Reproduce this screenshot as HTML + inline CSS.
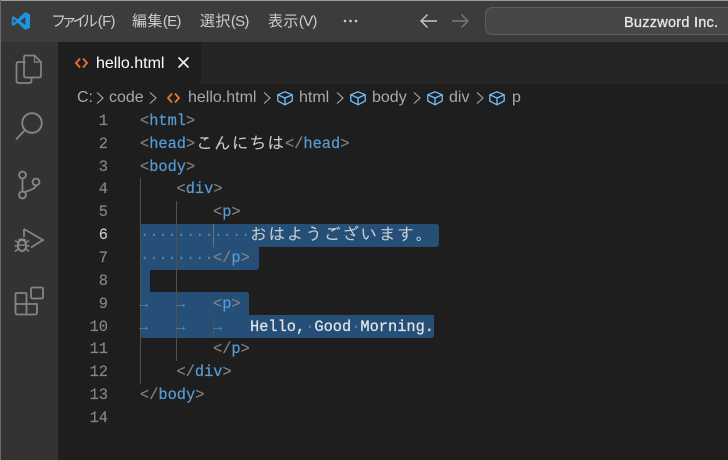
<!DOCTYPE html>
<html><head><meta charset="utf-8"><style>
*{margin:0;padding:0;box-sizing:border-box}
html,body{width:728px;height:460px;overflow:hidden;background:#1e1e1e}
body{position:relative;font-family:"Liberation Sans","Noto Sans CJK JP",sans-serif}
.a{position:absolute;white-space:pre}
#title{left:0;top:0;width:728px;height:42px;background:#3c3c3c;border-top:1px solid #9a9a9a}
#act{left:0;top:42px;width:58px;height:418px;background:#333}
#edge{left:0;top:0;width:1px;height:460px;background:#6a6a6a}
#tabs{left:58px;top:42px;width:670px;height:42px;background:#252526}
#tab{left:58px;top:42px;width:143px;height:42px;background:#1e1e1e}
.m{top:12px;font-size:15px;color:#ccc;line-height:20px;letter-spacing:.4px}
.m i{font-style:normal;letter-spacing:-.7px}
.bc{top:88px;font-size:16px;line-height:20px;color:#a9a9a9}
.ln{left:80px;width:28px;text-align:right;font:15.33px/22.85px "Liberation Mono",monospace;color:#858585;margin-top:1px;-webkit-text-stroke:.15px currentColor}
.c{font:15.33px/22.85px "Liberation Mono","IPAGothic",monospace;color:#d4d4d4;left:140px;margin-top:1px;-webkit-text-stroke:.2px currentColor}
.j{font-family:"IPAGothic","Noto Sans CJK JP",sans-serif;font-size:17px;letter-spacing:1.4px;-webkit-text-stroke:0;color:#c8ced4}
.g{color:#808080}.b{color:#569cd6}
.s{background:#264f78;position:absolute}
.ig{position:absolute;width:1px;background:#505050}
.d{font:15.33px/22.85px "Liberation Mono",monospace;color:#5b86ad;margin-top:1px}
svg{position:absolute;overflow:visible}
</style></head><body>
<div class="a" id="title"></div>
<div class="a" id="act"></div>
<div class="a" id="tabs"></div>
<div class="a" id="tab"></div>
<div class="a" id="edge"></div>

<svg style="left:11px;top:11px" width="20" height="20" viewBox="0 0 20 20"><path d="M14.2 1 L19 3.3 V16.7 L14.2 19 L6.5 11.8 L2.6 14.800 L.8 13.800 V6.200 L2.600 5.200 L6.500 8.200 Z" fill="#1f93dc"/><path d="M14.300 6 L9.400 10 L14.300 14 Z" fill="#3c3c3c"/><path d="M2.600 7.800 V12.200 L5 10 Z" fill="#3c3c3c"/></svg>
<div class="a m" style="left:51px"><span style="letter-spacing:-4.400px">ファイル</span><i style="margin-left:4.400px">(F)</i></div>
<div class="a m" style="left:132px">編集<i>(E)</i></div>
<div class="a m" style="left:200px">選択<i>(S)</i></div>
<div class="a m" style="left:268px">表示<i>(V)</i></div>
<svg style="left:343px;top:19px" width="16" height="4"><circle cx="2" cy="2" r="1.300" fill="#ccc"/><circle cx="7.500" cy="2" r="1.300" fill="#ccc"/><circle cx="13" cy="2" r="1.300" fill="#ccc"/></svg>
<svg style="left:420px;top:13px" width="18" height="16" fill="none" stroke="#c8c8c8" stroke-width="1.400"><path d="M1 8 H17 M7.500 1.500 L1 8 L7.500 14.500"/></svg>
<svg style="left:451px;top:13px" width="18" height="16" fill="none" stroke="#787878" stroke-width="1.400"><path d="M1 8 H17 M10.500 1.500 L17 8 L10.500 14.500"/></svg>
<div class="a" style="left:485px;top:7px;width:260px;height:28px;background:#474747;border:1px solid #5e5e5e;border-radius:7px"></div>
<div class="a" style="left:624px;top:13px;font-size:14.500px;line-height:20px;letter-spacing:.25px;color:#e8e8e8;-webkit-text-stroke:.3px #e8e8e8">Buzzword Inc.</div>

<svg style="left:14px;top:54px" width="30" height="32" fill="none" stroke="#858585" stroke-width="1.700"><path d="M11.500 8 H4.500 Q2.500 8 2.500 10 V27 Q2.500 29 4.500 29 H15.500 Q17.500 29 17.500 27 V23.500"/><path d="M10 3 Q10 1.500 11.500 1.500 H20.500 L27 8 V21.500 Q27 23.500 25 23.500 H12 Q10 23.500 10 21.500 Z"/><path d="M20.500 1.500 V8 H27" stroke-width="1.200"/></svg>
<svg style="left:14px;top:110px" width="30" height="32" fill="none" stroke="#858585" stroke-width="1.900"><circle cx="18" cy="13" r="9.800"/><path d="M11 20 L2 29.500"/></svg>
<svg style="left:16px;top:170px" width="26" height="32" fill="none" stroke="#858585" stroke-width="1.900"><circle cx="6.500" cy="5" r="3.400"/><circle cx="6.500" cy="25" r="3.400"/><circle cx="20" cy="12" r="3.400"/><path d="M6.500 8.500 V21.500 M20 15.500 Q19.500 19 8.500 22"/></svg>
<svg style="left:14px;top:226px" width="32" height="34" fill="none" stroke="#858585" stroke-width="1.800"><path d="M10 3 L29 14 L17 21.500 M10 3 V11"/><ellipse cx="8" cy="19.500" rx="4.200" ry="5.500" stroke-width="2"/><path d="M4 14.500 Q8 11.500 12 14.500 M1 14.500 L4 16.500 M15 14.500 L12 16.500 M.5 20 H3.500 M15.500 20 H12.500 M1 25.500 L4 23 M15 25.500 L12 23 M3.500 19 H12.500" stroke-width="1.500"/></svg>
<svg style="left:14px;top:286px" width="31" height="31" fill="none" stroke="#858585" stroke-width="1.800"><rect x="1.500" y="7" width="11" height="11" rx="1"/><path d="M12.500 18 H23 V26.500 Q23 28.500 21 28.500 H3.500 Q1.500 28.500 1.500 26.500 V18 M12.500 18 V28.500"/><rect x="17" y="1.500" width="12" height="11" rx="1.500"/></svg>

<svg style="left:75px;top:57px" width="13" height="12" fill="none" stroke="#e37933" stroke-width="1.800"><path d="M5 1.500 L1 6 L5 10.500 M8 1.500 L12 6 L8 10.500"/></svg>
<div class="a" style="left:96px;top:54px;font-size:16px;line-height:20px;color:#fff">hello.html</div>
<svg style="left:178px;top:57px" width="11" height="11" fill="none" stroke="#f0f0f0" stroke-width="1.600"><path d="M.5 .5 L10.500 10.500 M10.500 .5 L.5 10.500"/></svg>

<div class="a bc" style="left:77px">C:</div>
<div class="a bc" style="left:109px">code</div>
<div class="a bc" style="left:188px">hello.html</div>
<div class="a bc" style="left:299px">html</div>
<div class="a bc" style="left:372px">body</div>
<div class="a bc" style="left:449px">div</div>
<div class="a bc" style="left:512px">p</div>
<svg style="left:0;top:0" width="728" height="110" fill="none" stroke="#a9a9a9" stroke-width="1.100"><path d="M97 92.500 L103 98 L97 103.500 M150 92.500 L156 98 L150 103.500 M264 92.500 L270 98 L264 103.500 M337 92.500 L343 98 L337 103.500 M414 92.500 L420 98 L414 103.500 M477 92.500 L483 98 L477 103.500"/></svg>
<svg style="left:167px;top:92px" width="13" height="12" fill="none" stroke="#e37933" stroke-width="1.800"><path d="M5 1.500 L1 6 L5 10.500 M8 1.500 L12 6 L8 10.500"/></svg>
<svg width="0" height="0"><defs><g id="cube" fill="none" stroke="#75beff" stroke-width="1.300"><path d="M8 .8 L15.200 3.800 V10 L8 13.800 L.8 10 V3.800 Z M.8 3.800 L8 7 L15.200 3.800 M8 7 V13.800"/></g></defs></svg>
<svg style="left:277px;top:91px" width="16" height="16"><use href="#cube"/></svg>
<svg style="left:350px;top:91px" width="16" height="16"><use href="#cube"/></svg>
<svg style="left:427px;top:91px" width="16" height="16"><use href="#cube"/></svg>
<svg style="left:489px;top:91px" width="16" height="16"><use href="#cube"/></svg>

<div class="s" style="left:140px;top:224px;width:299px;height:23px;border-radius:3px 3px 3px 0"></div>
<div class="s" style="left:140px;top:247px;width:119px;height:23px;border-radius:0 0 3px 0"></div>
<div class="s" style="left:140px;top:270px;width:9.500px;height:22px"></div>
<div class="s" style="left:140px;top:292px;width:109px;height:23px;border-radius:0 3px 0 0"></div>
<div class="s" style="left:140px;top:315px;width:294px;height:23px;border-radius:0 0 3px 3px"></div>
<div class="a" style="left:149.500px;top:270px;width:110px;height:22px;background:#1e1e1e;border-radius:3px"></div>

<div class="ig" style="left:140px;top:178px;height:206px"></div>
<div class="ig" style="left:176px;top:201px;height:160px"></div>
<div class="ig" style="left:213px;top:224px;height:23px;background:#707070"></div>
<div class="ig" style="left:213px;top:315px;height:23px"></div>

<div class="a ln" style="top:109px">1</div>
<div class="a ln" style="top:132px">2</div>
<div class="a ln" style="top:155px">3</div>
<div class="a ln" style="top:177px">4</div>
<div class="a ln" style="top:200px">5</div>
<div class="a ln" style="top:223px;color:#c6c6c6">6</div>
<div class="a ln" style="top:246px">7</div>
<div class="a ln" style="top:269px">8</div>
<div class="a ln" style="top:292px">9</div>
<div class="a ln" style="top:315px">10</div>
<div class="a ln" style="top:337px">11</div>
<div class="a ln" style="top:360px">12</div>
<div class="a ln" style="top:383px">13</div>
<div class="a ln" style="top:406px">14</div>

<div class="a c" style="top:109px"><span class="g">&lt;</span><span class="b">html</span><span class="g">&gt;</span></div>
<div class="a c" style="top:132px"><span class="g">&lt;</span><span class="b">head</span><span class="g">&gt;</span></div>
<div class="a c j" style="top:132px;left:196px;letter-spacing:.8px">こんにちは</div>
<div class="a c" style="top:132px;left:285px"><span class="g">&lt;/</span><span class="b">head</span><span class="g">&gt;</span></div>
<div class="a c" style="top:155px"><span class="g">&lt;</span><span class="b">body</span><span class="g">&gt;</span></div>
<div class="a c" style="top:177px;left:176.500px"><span class="g">&lt;</span><span class="b">div</span><span class="g">&gt;</span></div>
<div class="a c" style="top:200px;left:213px"><span class="g">&lt;</span><span class="b">p</span><span class="g">&gt;</span></div>
<div class="a d" style="top:223px;left:140px">············</div>
<div class="a c j" style="top:223px;left:250px">おはようございます。</div>
<div class="a d" style="top:246px;left:140px">········</div>
<div class="a c" style="top:246px;left:213px"><span class="g">&lt;/</span><span class="b">p</span><span class="g">&gt;</span></div>
<div class="a d" style="top:292px;left:139px">→</div>
<div class="a d" style="top:292px;left:176px">→</div>
<div class="a c" style="top:292px;left:213px"><span class="g">&lt;</span><span class="b">p</span><span class="g">&gt;</span></div>
<div class="a d" style="top:315px;left:139px">→</div>
<div class="a d" style="top:315px;left:176px">→</div>
<div class="a d" style="top:315px;left:213px">→</div>
<div class="a c" style="top:315px;left:250px;color:#e2e6ea">Hello,<span class="d" style="-webkit-text-stroke:0">·</span>Good<span class="d" style="-webkit-text-stroke:0">·</span>Morning.</div>
<div class="a c" style="top:337px;left:213px"><span class="g">&lt;/</span><span class="b">p</span><span class="g">&gt;</span></div>
<div class="a c" style="top:360px;left:176.500px"><span class="g">&lt;/</span><span class="b">div</span><span class="g">&gt;</span></div>
<div class="a c" style="top:383px"><span class="g">&lt;/</span><span class="b">body</span><span class="g">&gt;</span></div>
</body></html>
